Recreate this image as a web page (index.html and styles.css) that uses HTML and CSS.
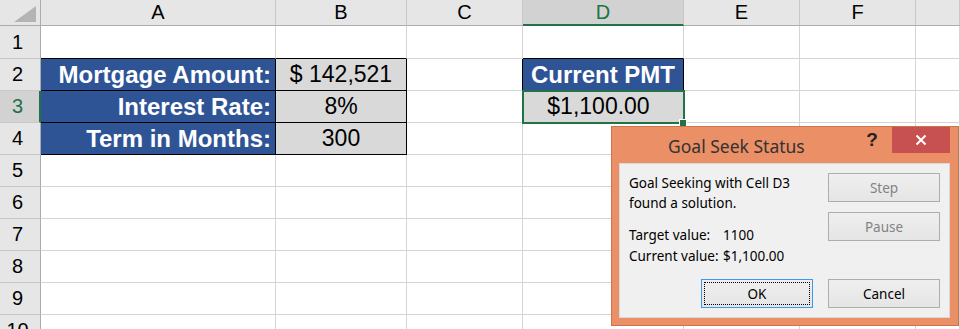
FILE: index.html
```html
<!DOCTYPE html>
<html lang="en">
<head>
    <meta charset="UTF-8">
    <meta name="viewport" content="width=device-width, initial-scale=1.0">
    <link rel="stylesheet" href="styles.css">
</head>
<body>
    <div class="sheet">
        <!-- column headers -->
        <div class="corner">
            <svg width="40" height="25" viewBox="0 0 40 25"><polygon points="14,22 36,22 36,6" fill="#b4b4b4"/></svg>
        </div>
        <div class="col-hdr">A</div>
        <div class="col-hdr">B</div>
        <div class="col-hdr">C</div>
        <div class="col-hdr selected">D</div>
        <div class="col-hdr">E</div>
        <div class="col-hdr">F</div>
        <div class="col-hdr"></div>

        <!-- row 1 -->
        <div class="row-hdr">1</div>
        <div class="cell edge-b"></div>
        <div class="cell edge-b"></div>
        <div class="cell"></div>
        <div class="cell edge-b"></div>
        <div class="cell"></div>
        <div class="cell"></div>
        <div class="cell"></div>

        <!-- row 2 -->
        <div class="row-hdr">2</div>
        <div class="cell label">Mortgage Amount:</div>
        <div class="cell value">$ 142,521</div>
        <div class="cell edge-r"></div>
        <div class="cell label center">Current PMT</div>
        <div class="cell"></div>
        <div class="cell"></div>
        <div class="cell"></div>

        <!-- row 3 -->
        <div class="row-hdr selected">3</div>
        <div class="cell label">Interest Rate:</div>
        <div class="cell value">8%</div>
        <div class="cell"></div>
        <div class="cell value active">$1,100.00</div>
        <div class="cell"></div>
        <div class="cell"></div>
        <div class="cell"></div>

        <!-- row 4 -->
        <div class="row-hdr">4</div>
        <div class="cell label">Term in Months:</div>
        <div class="cell value">300</div>
        <div class="cell"></div>
        <div class="cell"></div>
        <div class="cell"></div>
        <div class="cell"></div>
        <div class="cell"></div>

        <div class="row-hdr">5</div>
        <div class="cell"></div><div class="cell"></div><div class="cell"></div><div class="cell"></div><div class="cell"></div><div class="cell"></div><div class="cell"></div>
        <div class="row-hdr">6</div>
        <div class="cell"></div><div class="cell"></div><div class="cell"></div><div class="cell"></div><div class="cell"></div><div class="cell"></div><div class="cell"></div>
        <div class="row-hdr">7</div>
        <div class="cell"></div><div class="cell"></div><div class="cell"></div><div class="cell"></div><div class="cell"></div><div class="cell"></div><div class="cell"></div>
        <div class="row-hdr">8</div>
        <div class="cell"></div><div class="cell"></div><div class="cell"></div><div class="cell"></div><div class="cell"></div><div class="cell"></div><div class="cell"></div>
        <div class="row-hdr">9</div>
        <div class="cell"></div><div class="cell"></div><div class="cell"></div><div class="cell"></div><div class="cell"></div><div class="cell"></div><div class="cell"></div>
        <div class="row-hdr">10</div>
        <div class="cell"></div><div class="cell"></div><div class="cell"></div><div class="cell"></div><div class="cell"></div><div class="cell"></div><div class="cell"></div>
    </div>

    <!-- Goal Seek dialog -->
    <div class="dialog">
        <div class="title-bar">
            <div class="title">Goal Seek Status</div>
            <div class="help">?</div>
            <div class="close">
                <svg width="12" height="12" viewBox="0 0 12 12"><path d="M1.5 1.5 L10.5 10.5 M10.5 1.5 L1.5 10.5" stroke="#fff" stroke-width="2"/></svg>
            </div>
        </div>
        <div class="panel">
            <div class="panel-top">
                <div class="status-text">
                    <div class="msg">Goal Seeking with Cell D3<br>found a solution.</div>
                    <div class="stat"><span class="stat-label">Target value:</span>1100</div>
                    <div class="stat"><span class="stat-label">Current value:</span>$1,100.00</div>
                </div>
                <div class="side-buttons">
                    <button type="button" class="btn" disabled>Step</button>
                    <button type="button" class="btn" disabled>Pause</button>
                </div>
            </div>
            <div class="bottom-buttons">
                <button type="button" class="btn default">OK</button>
                <button type="button" class="btn">Cancel</button>
            </div>
        </div>
    </div>
</body>
</html>
```

FILE: styles.css
```css
:root {
    --grid: #d4d4d4;
    --hdr-bg: #e6e6e6;
    --hdr-line: #ababab;
    --hdr-sep: #c8c8c8;
    --sel-bg: #d2d2d2;
    --excel-green: #217346;
    --blue: #2f5496;
    --grey-fill: #d9d9d9;
    --dlg-orange: #ea8f66;
    --dlg-border: #c9764f;
}

body {
    margin: 0;
    background: #fff;
    overflow: hidden;
    font-family: "Liberation Sans", Arial, sans-serif;
}

.sheet {
    display: grid;
    grid-template-columns: 41px 235px 131px 116px 161px 116px 116px 1fr;
    grid-template-rows: 26px 33px;
    grid-auto-rows: 32px;
}

.sheet > div {
    box-sizing: border-box;
    border-right: 1px solid var(--grid);
    border-bottom: 1px solid var(--grid);
}

.corner {
    background: var(--hdr-bg);
    border-right-color: var(--hdr-line) !important;
    border-bottom-color: var(--hdr-line) !important;
}

.corner svg {
    display: block;
}

.col-hdr {
    background: var(--hdr-bg);
    border-right-color: var(--hdr-sep) !important;
    border-bottom-color: var(--hdr-line) !important;
    font-size: 20px;
    line-height: 25px;
    text-align: center;
    color: #000;
}

.col-hdr.selected {
    background: var(--sel-bg);
    color: var(--excel-green);
    border-bottom: 2px solid var(--excel-green) !important;
    line-height: 24px;
}

.row-hdr {
    background: var(--hdr-bg);
    border-right-color: var(--hdr-line) !important;
    border-bottom-color: var(--hdr-sep) !important;
    font-size: 20px;
    display: flex;
    align-items: center;
    justify-content: center;
    padding-right: 5px;
    color: #000;
}

.row-hdr.selected {
    background: var(--sel-bg);
    color: var(--excel-green);
    border-right: 2px solid var(--excel-green) !important;
    padding-right: 4px;
}

.cell {
    display: flex;
    align-items: center;
    justify-content: center;
    font-size: 23px;
    color: #000;
    white-space: nowrap;
}

.edge-b {
    border-bottom-color: #000 !important;
}

.edge-r {
    border-right-color: #000 !important;
}

.cell.label {
    background: var(--blue);
    color: #fff;
    font-weight: bold;
    font-size: 24px;
    justify-content: flex-end;
    padding-right: 4px;
    border-right-color: #000;
    border-bottom-color: #000;
}

.cell.label.center {
    justify-content: center;
    padding-right: 0;
}

.cell.value {
    background: var(--grey-fill);
    border-right-color: #000;
    border-bottom-color: #000;
}

.cell.active {
    position: relative;
    padding-right: 9px;
}

.cell.active::before {
    content: "";
    position: absolute;
    top: -1px;
    left: -1px;
    right: -2px;
    bottom: -2px;
    border: 2px solid var(--excel-green);
}

.cell.active::after {
    content: "";
    position: absolute;
    right: -3px;
    bottom: -4px;
    width: 6px;
    height: 6px;
    background: var(--excel-green);
    box-shadow: 0 0 0 1px #fff;
}

/* dialog */
.dialog {
    position: absolute;
    left: 611px;
    top: 126px;
    width: 348px;
    box-sizing: border-box;
    background: var(--dlg-orange);
    border: 1px solid var(--dlg-border);
    padding: 0 8px 7px 7px;
    font-family: "Noto Sans", "Open Sans", sans-serif;
    z-index: 10;
}

.title-bar {
    display: flex;
    align-items: flex-start;
    height: 36px;
}

.title {
    flex: 1;
    padding-left: 49px;
    line-height: 38px;
    font-size: 17.5px;
    color: #333;
}

.help {
    width: 20px;
    margin-right: 10px;
    line-height: 26px;
    text-align: center;
    font-family: "Liberation Sans", Arial, sans-serif;
    font-weight: bold;
    font-size: 19px;
    color: #222;
}

.close {
    width: 58px;
    height: 26px;
    background: #c75050;
    display: flex;
    align-items: center;
    justify-content: center;
}

.close svg {
    display: block;
}

.panel {
    height: 155px;
    box-sizing: border-box;
    background: #f0f0f0;
    border: 1px solid #d9d9d9;
    padding: 9px;
    display: flex;
    flex-direction: column;
    font-size: 13.5px;
    color: #000;
}

.panel-top {
    display: flex;
    justify-content: space-between;
}

.msg {
    line-height: 20px;
}

.stat {
    line-height: 21px;
}

.msg + .stat {
    margin-top: 12px;
}

.stat-label {
    display: inline-block;
    width: 94px;
}

.side-buttons {
    display: flex;
    flex-direction: column;
    gap: 10px;
}

.bottom-buttons {
    margin-top: auto;
    display: flex;
    justify-content: flex-end;
    gap: 15px;
}

.btn {
    position: relative;
    width: 112px;
    height: 29px;
    padding: 0;
    background: linear-gradient(#efefef, #e5e5e5);
    border: 1px solid #adadad;
    font-family: "Noto Sans", "Open Sans", sans-serif;
    font-size: 13.5px;
    color: #000;
}

.btn:disabled {
    color: #838383;
}

.btn.default {
    border-color: #3c99f0;
}

.btn.default::after {
    content: "";
    position: absolute;
    top: 2px;
    left: 2px;
    right: 2px;
    bottom: 2px;
    border: 1px dotted #000;
}
```
